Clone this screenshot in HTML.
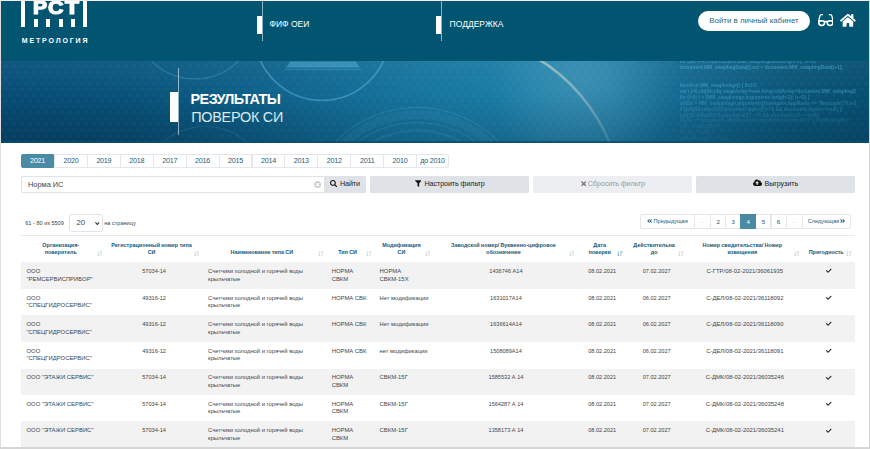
<!DOCTYPE html><html lang="ru"><head><meta charset="utf-8"><title>Результаты поверок СИ</title><style>
*{box-sizing:border-box;margin:0;padding:0}
html,body{width:870px;height:449px;overflow:hidden;background:#fff}
body{position:relative;font-family:"Liberation Sans",sans-serif;color:#3f4449;-webkit-font-smoothing:antialiased}
.abs{position:absolute}
.ic{display:inline-block;vertical-align:middle}
header{position:absolute;left:0;top:0;width:870px;height:60.500px;background:#015571}
.logo .bar{position:absolute;background:#fff}
.logo .rst span{position:absolute;top:-2.9px;font-weight:700;font-size:18.1px;line-height:22px;color:#fff;-webkit-text-stroke:1.2px #fff;transform-origin:0 0;white-space:nowrap}
.logo .met{position:absolute;left:21.8px;top:36.4px;font-weight:700;font-size:7px;line-height:9px;letter-spacing:1.85px;color:#fff;white-space:nowrap}
nav .vl{position:absolute;top:0;width:1px;height:41.3px;background:rgba(255,255,255,.55)}
nav .wb{position:absolute;top:15.6px;width:5px;height:18.2px;background:#fff}
nav a{position:absolute;top:18px;line-height:12px;font-size:8.5px;color:#fff;text-decoration:none;white-space:nowrap}
.login{position:absolute;left:698px;top:11px;width:112px;height:19.6px;border-radius:10px;background:#fff;color:#2a6885;font-size:7.900px;line-height:19.600px;text-align:center;white-space:nowrap}
.banner{position:absolute;left:0;top:60.5px;width:870px;height:82px;overflow:hidden;background:#0f5f83}
.banner .g{position:absolute;inset:0;background:linear-gradient(90deg,#07507a 0%,#09567e 15%,#0e628b 30%,#16759e 48%,#1c7fa8 62%,#1a7aa3 70%,#106288 82%,#095476 92%,#074f71 100%)}
.banner .g2{position:absolute;inset:0;background:radial-gradient(ellipse 300px 70px at 60px 82px,rgba(0,25,45,.2),rgba(0,25,45,0)),linear-gradient(180deg,rgba(255,255,255,.04) 0%,rgba(0,0,0,0) 40%,rgba(0,30,50,.22) 100%)}
.code{position:absolute;left:679.500px;top:-1.400px;font-weight:700;font-size:4.850px;line-height:5.930px;color:#4fb0da;white-space:nowrap;width:176px;overflow:hidden}
.banner h1{position:absolute;left:190.6px;top:91px;font-size:14.4px;line-height:17.8px;color:#fff;font-weight:400;white-space:nowrap;margin-top:-60.5px}
.banner h1 b{font-weight:700;display:block;letter-spacing:-0.580px}
.banner h1 span{display:block;font-weight:400;color:#dbe9f0;letter-spacing:-0.250px;margin-left:0.600px}
.tabs{position:absolute;left:0;top:154.200px;height:13.900px}
.tabs a{position:absolute;top:0;display:block;height:13.900px;border:1px solid #e4e8ec;background:#fff;text-align:center;font-size:7.200px;letter-spacing:-0.250px;line-height:12px;color:#1d5b78;white-space:nowrap}
.tabs a.on{background:#4a8aa3;border-color:#4a8aa3;color:#fff;border-radius:2px 0 0 2px;z-index:2}
.tabs a:last-child{border-radius:0 2px 2px 0}
.inp{position:absolute;left:21px;top:175.6px;width:303.500px;height:17.2px;border:0.5px solid #dfe4e8;border-right:0;border-radius:2px 0 0 2px;font-size:7.400px;line-height:15.400px;padding-left:6px;color:#444}
.btn{position:absolute;top:175.8px;height:17px;border-radius:1.500px;background:#dfe3e8;color:#222;font-size:7.200px;letter-spacing:-0.100px;line-height:16.200px;text-align:center;white-space:nowrap}
.btn.dis{background:#eceef1;color:#9a9a9a}
.info{position:absolute;font-size:5.600px;line-height:8px;color:#454545;white-space:nowrap}
.sel{position:absolute;left:69.100px;top:214.100px;width:33.600px;height:17.500px;border:1px solid #dfe4e8;border-radius:2.500px;font-size:7.800px;line-height:16px;padding-left:6.400px;color:#444}
.pag{position:absolute;left:0;top:213.800px;height:15.700px}
.pag a{position:absolute;top:0;display:block;height:15.700px;border:1px solid #e4e8ec;background:#fff;text-align:center;font-size:5.600px;line-height:13.700px;color:#1d5b78;white-space:nowrap}
.pag a.num{font-size:6.200px}
.pag a.on{background:#4a8aa3;border-color:#4a8aa3;color:#fff;z-index:2}
.pag a.d{color:#a9b4bb}
.pag a:first-child{border-radius:2px 0 0 2px}
.pag a:last-child{border-radius:0 2px 2px 0}
.tbl{position:absolute;left:21px;top:235.200px;width:833.700px}
.thead{position:relative;height:27.500px;border-top:1px solid #e8ebee}
.th{position:absolute;top:0;height:100%;font-weight:700;font-size:5.450px;word-spacing:-0.300px;line-height:7.300px;color:#185878;text-align:center;display:flex;flex-direction:column;justify-content:flex-end;padding:0 10.600px 6.200px 5.500px;white-space:nowrap}
.th .si{position:absolute;right:3.200px;bottom:6.700px}
.tr{position:absolute;left:0;width:100%}
.tr.odd{background:#f2f2f2}
.td{position:absolute;top:var(--t);font-size:5.900px;line-height:7.500px;color:#41464b;padding:0 5.500px;white-space:nowrap}
.td.c{text-align:center}
.td.s{font-size:5.800px}
.td.n{font-size:5.600px}
.td.m{font-size:5.650px}
.frame{position:absolute;pointer-events:none}
</style></head><body>
<header>
<div class="logo">
<div class="bar" style="left:21.300px;top:0;width:4.100px;height:27.100px"></div>
<div class="bar" style="left:83.100px;top:0;width:4.300px;height:27.100px"></div>
<div class="bar" style="left:33.85px;top:18.900px;width:4px;height:8.200px"></div>
<div class="bar" style="left:46.3px;top:18.900px;width:4px;height:8.200px"></div>
<div class="bar" style="left:58.7px;top:18.900px;width:4px;height:8.200px"></div>
<div class="bar" style="left:71.0px;top:18.900px;width:4px;height:8.200px"></div>
<div class="rst"><span style="left:33.1px;transform:scaleX(1.17)">Р</span><span style="left:48.2px;transform:scaleX(1.18)">С</span><span style="left:65.2px;transform:scaleX(1.26)">Т</span></div><div class="met">МЕТРОЛОГИЯ</div></div>
<nav>
<div class="vl" style="left:262px"></div><div class="wb" style="left:257px"></div><a style="left:269.500px">ФИФ ОЕИ</a>
<div class="vl" style="left:441.200px"></div><div class="wb" style="left:436.200px"></div><a style="left:449.600px">ПОДДЕРЖКА</a>
</nav>
<div class="login">Войти в личный кабинет</div>
<svg class="ic" viewBox="0 0 576 512" width="15.8" height="14.04" style="position:absolute;left:817.500px;top:13px" fill="#fff"><path d="M574.1 280.37L528.75 98.66c-5.91-23.7-21.59-44.05-43-55.81-21.44-11.73-46.97-14.11-70.19-6.33l-15.25 5.08c-8.39 2.79-12.92 11.86-10.12 20.24l5.06 15.18c2.79 8.38 11.85 12.91 20.23 10.12l13.18-4.39c10.87-3.62 23-3.57 33.16 1.73 10.29 5.37 17.57 14.56 20.37 25.82l38.46 153.82c-22.19-6.81-49.79-12.46-81.2-12.46-34.77 0-73.98 7.02-114.85 26.74h-73.18c-40.87-19.74-80.08-26.75-114.86-26.75-31.42 0-59.02 5.65-81.21 12.46l38.46-153.83c2.79-11.25 10.09-20.45 20.38-25.81 10.16-5.3 22.28-5.35 33.15-1.73l13.17 4.39c8.38 2.79 17.44-1.74 20.23-10.12l5.06-15.18c2.8-8.38-1.73-17.45-10.12-20.24l-15.25-5.08c-23.22-7.78-48.75-5.41-70.19 6.33-21.41 11.77-37.09 32.11-43 55.8L1.9 280.37A64.218 64.218 0 0 0 0 295.86v70.25C0 429.01 51.58 480 115.2 480h37.12c60.28 0 110.37-45.94 114.88-105.37l2.93-38.63h35.75l2.93 38.63C313.31 434.06 363.4 480 423.68 480h37.12c63.62 0 115.2-50.99 115.2-113.88v-70.25c0-5.23-.64-10.43-1.9-15.5zm-370.72 89.42c-1.97 25.91-24.4 46.21-51.06 46.21H115.2C86.97 416 64 393.62 64 366.11v-37.54c18.12-6.49 43.42-12.92 72.58-12.92 23.86 0 47.26 4.33 69.93 12.92l-3.13 41.22zM512 366.12c0 27.51-22.97 49.88-51.2 49.88h-37.12c-26.67 0-49.1-20.3-51.06-46.21l-3.13-41.22c22.67-8.59 46.08-12.92 69.95-12.92 29.12 0 54.43 6.44 72.55 12.93v37.54z"/></svg>
<svg preserveAspectRatio="none" class="ic" viewBox="0 0 576 512" width="15.8" height="14.7" style="position:absolute;left:840px;top:13.200px" fill="#fff"><path d="M280.37 148.26L96 300.11V464a16 16 0 0 0 16 16l112.06-.29a16 16 0 0 0 15.920-16V368a16 16 0 0 1 16-16h64a16 16 0 0 1 16 16v95.640a16 16 0 0 0 16 16.050L464 480a16 16 0 0 0 16-16V300L295.670 148.260a12.190 12.190 0 0 0-15.300 0zM571.600 251.470L488 182.560V44.050a12 12 0 0 0-12-12h-56a12 12 0 0 0-12 12v72.610L318.470 43a48 48 0 0 0-61 0L4.340 251.470a12 12 0 0 0-1.600 16.900l25.500 31A12 12 0 0 0 45.150 301l235.220-193.740a12.190 12.190 0 0 1 15.300 0L530.900 301a12 12 0 0 0 16.900-1.600l25.500-31a12 12 0 0 0-1.700-16.930z"/></svg>
</header>
<section class="banner"><div class="g"></div><div class="g2"></div>
<svg class="abs" style="left:0;top:0" width="870" height="82" viewBox="0 60.5 870 82"><g fill="none" stroke="#6cc0e0"><circle cx="195" cy="16.6" r="61.8" stroke-width="1.3" stroke-opacity=".28"/><circle cx="322" cy="32.4" r="67.4" stroke-width="1.8" stroke-opacity=".42"/><circle cx="417" cy="222" r="115" stroke-width="1" stroke-opacity=".22"/><circle cx="417" cy="222" r="108" stroke-width="9" stroke-opacity=".07"/><circle cx="417" cy="222" r="100" stroke-width="1" stroke-opacity=".18"/><circle cx="417" cy="222" r="92" stroke-width="2.5" stroke-opacity=".10"/><circle cx="205" cy="190" r="64" stroke-width="1.2" stroke-opacity=".16"/></g><defs><linearGradient id="sg" x1="0" y1="0" x2="0" y2="1"><stop offset="0" stop-color="#ffeedd" stop-opacity=".5"/><stop offset=".55" stop-color="#ffeedd" stop-opacity=".28"/><stop offset="1" stop-color="#ffeedd" stop-opacity=".08"/></linearGradient><radialGradient id="hz" cx="585" cy="80" r="95" gradientUnits="userSpaceOnUse"><stop offset="0" stop-color="#cfe6ee" stop-opacity=".16"/><stop offset="1" stop-color="#cfe6ee" stop-opacity="0"/></radialGradient><pattern id="dt" width="8" height="11.600" patternUnits="userSpaceOnUse"><circle cx="2" cy="2" r="1.700" fill="#fff" fill-opacity=".028"/><circle cx="6" cy="7.800" r="1.700" fill="#fff" fill-opacity=".028"/></pattern><filter id="bl" x="-20%" y="-20%" width="140%" height="140%"><feGaussianBlur stdDeviation="0.700"/></filter></defs><rect x="0" y="60" width="870" height="84" fill="url(#dt)"/><rect x="470" y="60" width="240" height="84" fill="url(#hz)"/><path d="M534.300 56A178 178 0 0 1 611.100 146" fill="none" stroke="url(#sg)" stroke-width="2.600" filter="url(#bl)"/><path d="M290 61H356L359.500 67H286.500Z" fill="#57b3d8" fill-opacity=".5"/><rect x="284.500" y="68.300" width="77" height="1" fill="#57b3d8" fill-opacity=".45"/></svg>
<div class="code">
<p style="opacity:0.5">for (var i=0; i&lt;(document.MM_swapImgData.length-1); i+=2)</p>
<p style="opacity:0.6">document.MM_swapImgData[i].src = document.MM_swapImgData[i+1];</p>
<p style="opacity:0">&nbsp;</p>
<p style="opacity:0">&nbsp;</p>
<p style="opacity:0.5">function MM_swapImage() { //v3.0</p>
<p style="opacity:0.5">var i,j=0,objStr,obj,swapArray=new Array,oldArray=document.MM_swapImgData;</p>
<p style="opacity:0.45">for (i=0; i &lt; (MM_swapImage.arguments.length-2); i+=3) {</p>
<p style="opacity:0.4">objStr = MM_swapImage.arguments[(navigator.appName == 'Netscape')?i:i+1];</p>
<p style="opacity:0.32">if ((objStr.indexOf('document.layers[')==0 &amp;&amp; document.layers==null) ||</p>
<p style="opacity:0.26">(objStr.indexOf('document.all[') ==0 &amp;&amp; document.all ==null))</p>
<p style="opacity:0.2">objStr = 'document'+objStr.substring(objStr.lastIndexOf('.'),objStr.length);</p>
<p style="opacity:0.16">obj = eval(objStr);</p>
<p style="opacity:0.13">if (obj != null) {</p>
<p style="opacity:0.1">swapArray[j++] = obj;</p>
</div>
<div class="abs" style="left:178.300px;top:7.200px;width:1px;height:67.500px;background:rgba(255,255,255,.55)"></div>
<div class="abs" style="left:170.200px;top:31.600px;width:8.100px;height:29.600px;background:#fff"></div>
<h1><b>РЕЗУЛЬТАТЫ</b><span>ПОВЕРОК СИ</span></h1>
<div class="abs" style="left:0;top:80.500px;width:870px;height:1.500px;background:#0a4d6c;opacity:.8"></div>
</section>
<div class="tabs">
<a class=on style="left:21.10px;width:32.91px">2021</a>
<a style="left:54.02px;width:33.92px">2020</a>
<a style="left:86.93px;width:33.91px">2019</a>
<a style="left:119.84px;width:33.91px">2018</a>
<a style="left:152.76px;width:33.91px">2017</a>
<a style="left:185.67px;width:33.92px">2016</a>
<a style="left:218.59px;width:33.91px">2015</a>
<a style="left:251.50px;width:33.92px">2014</a>
<a style="left:284.42px;width:33.92px">2013</a>
<a style="left:317.34px;width:33.91px">2012</a>
<a style="left:350.25px;width:33.92px">2011</a>
<a style="left:383.17px;width:33.92px">2010</a>
<a style="left:416.08px;width:32.91px">до 2010</a>
</div>
<div class="inp">Норма ИС<svg class="ic" viewBox="0 0 512 512" width="7.2" height="7.2" style="position:absolute;left:291.700px;top:4.600px" fill="#cfcfcf"><path d="M256 8C119 8 8 119 8 256s111 248 248 248 248-111 248-248S393 8 256 8zm121.6 313.1c4.7 4.7 4.7 12.3 0 17L338 377.6c-4.7 4.7-12.3 4.7-17 0L256 312l-65.1 65.6c-4.7 4.7-12.3 4.7-17 0L134.4 338c-4.7-4.7-4.7-12.3 0-17l65.6-65-65.6-65.1c-4.7-4.7-4.7-12.3 0-17l39.6-39.6c4.700-4.7 12.300-4.7 17 0l65 65.7 65.1-65.6c4.700-4.700 12.300-4.700 17 0l39.600 39.600c4.700 4.700 4.700 12.300 0 17L312 256l65.600 65.100z"/></svg></div>
<div class="btn" style="left:324.300px;width:41.700px;border-radius:0 1.500px 1.500px 0"><svg class="ic" viewBox="0 0 512 512" width="7.2" height="7.2" style="margin:-0.600px 2.500px 0 0" fill="#111"><path d="M505 442.7L405.3 343c-4.5-4.5-10.6-7-17-7H372c27.6-35.3 44-79.7 44-128C416 93.1 322.9 0 208 0S0 93.1 0 208s93.1 208 208 208c48.3 0 92.7-16.4 128-44v16.3c0 6.4 2.5 12.5 7 17l99.7 99.7c9.4 9.4 24.6 9.4 33.9 0l28.3-28.3c9.4-9.4 9.4-24.6.1-34zM208 336c-70.7 0-128-57.2-128-128 0-70.7 57.2-128 128-128 70.7 0 128 57.2 128 128 0 70.7-57.2 128-128 128z"/></svg>Найти</div>
<div class="btn" style="left:370.300px;width:158.900px"><svg class="ic" viewBox="0 0 512 512" width="6.6" height="7.2" style="margin:-1px 3px 0 0" fill="#111"><path d="M487.976 0H24.028C2.71 0-8.047 25.866 7.058 40.971L192 225.941V432c0 7.831 3.821 15.17 10.237 19.662l80 55.98C298.02 518.69 320 507.493 320 487.98V225.941l184.947-184.97C520.021 25.896 509.338 0 487.976 0z"/></svg>Настроить фильтр</div>
<div class="btn dis" style="left:533.300px;width:158.900px"><svg class="ic" viewBox="0 0 352 512" width="5.4" height="7.4" style="margin:-0.700px 1.700px 0 0" fill="#777"><path d="M242.72 256l100.07-100.07c12.28-12.28 12.28-32.19 0-44.48l-22.24-22.24c-12.28-12.28-32.19-12.28-44.48 0L176 189.28 75.93 89.21c-12.28-12.28-32.19-12.28-44.48 0L9.21 111.45c-12.28 12.28-12.28 32.19 0 44.48L109.28 256 9.21 356.07c-12.28 12.28-12.28 32.19 0 44.48l22.24 22.24c12.28 12.28 32.2 12.28 44.48 0L176 322.72l100.07 100.07c12.28 12.28 32.2 12.28 44.48 0l22.24-22.24c12.28-12.28 12.28-32.19 0-44.48L242.72 256z"/></svg>Сбросить фильтр</div>
<div class="btn" style="left:696.200px;width:158.600px"><svg class="ic" viewBox="0 0 640 512" width="9.2" height="7.36" style="margin:-1.700px 2.400px 0 0" fill="#111"><path d="M537.6 226.6c4.1-10.7 6.4-22.4 6.4-34.6 0-53-43-96-96-96-19.7 0-38.1 6-53.3 16.2C367 64.2 315.3 32 256 32c-88.4 0-160 71.6-160 160 0 2.7.1 5.4.2 8.1C40.2 219.8 0 273.2 0 336c0 79.5 64.5 144 144 144h368c70.7 0 128-57.3 128-128 0-61.9-44-113.6-102.4-125.4zM393.4 288H328v112c0 8.8-7.2 16-16 16h-48c-8.8 0-16-7.2-16-16V288h-65.4c-14.3 0-21.4-17.2-11.3-27.3l105.4-105.4c6.2-6.2 16.4-6.2 22.6 0l105.4 105.4c10.1 10.1 2.9 27.3-11.3 27.3z"/></svg>Выгрузить</div>
<div class="info" style="left:25.200px;top:219.400px">61 - 80 из 5509</div>
<div class="sel">20<svg class="abs" style="left:25px;top:6.600px" width="4.600" height="3.200" viewBox="0 0 10 7"><path d="M1 1L5 5.500L9 1" stroke="#222" stroke-width="2.200" fill="none"/></svg></div>
<div class="info" style="left:104.200px;top:219.400px">на страницу</div>
<div class="pag">
<a style="left:640.30px;width:54.30px"><svg class="ic" viewBox="0 0 448 512" width="5.2" height="5.9" style="margin:-0.800px 1.200px 0 0" fill="#1d5b78"><path d="M223.7 239l136-136c9.4-9.4 24.6-9.4 33.9 0l22.6 22.6c9.4 9.4 9.4 24.6 0 33.9L319.9 256l96.4 96.4c9.4 9.4 9.4 24.6 0 33.9L393.7 409c-9.4 9.4-24.6 9.4-33.9 0l-136-136c-9.5-9.4-9.5-24.6-.1-34zm-192 34l136 136c9.4 9.4 24.6 9.4 33.9 0l22.6-22.6c9.4-9.4 9.4-24.6 0-33.9L127.9 256l96.4-96.4c9.4-9.4 9.4-24.6 0-33.9L201.7 103c-9.4-9.4-24.6-9.4-33.9 0l-136 136c-9.5 9.4-9.5 24.6-.1 34z"/></svg>Предыдущая</a>
<a class=d style="left:693.60px;width:17.50px">…</a>
<a class=num style="left:710.10px;width:16.20px">2</a>
<a class=num style="left:725.30px;width:15.90px">3</a>
<a class="on num" style="left:740.20px;width:16.10px">4</a>
<a class=num style="left:755.30px;width:16.20px">5</a>
<a class=num style="left:770.50px;width:16.20px">6</a>
<a class=d style="left:785.70px;width:17.40px">…</a>
<a style="left:802.10px;width:49.30px">Следующая<svg class="ic" viewBox="0 0 448 512" width="5.2" height="5.9" style="margin:-0.800px 0 0 1.400px" fill="#1d5b78"><path transform="translate(448 0) scale(-1 1)" d="M223.7 239l136-136c9.4-9.4 24.6-9.4 33.9 0l22.6 22.6c9.4 9.4 9.4 24.6 0 33.9L319.9 256l96.4 96.4c9.4 9.4 9.4 24.6 0 33.9L393.7 409c-9.4 9.4-24.6 9.4-33.9 0l-136-136c-9.5-9.4-9.5-24.6-.1-34zm-192 34l136 136c9.4 9.4 24.6 9.4 33.9 0l22.6-22.6c9.4-9.4 9.4-24.6 0-33.9L127.9 256l96.4-96.4c9.4-9.4 9.4-24.6 0-33.9L201.7 103c-9.4-9.4-24.6-9.4-33.9 0l-136 136c-9.5 9.4-9.5 24.6-.1 34z"/></svg></a>
</div>
<div class="tbl"><div class="thead">
<div class="th" style="left:0.0px;width:84.6px"><span>Организация-</span><span>поверитель</span><svg class="si" viewBox="0 0 12 12" width="5.4" height="5.4"><g stroke="#bdd1db" stroke-width="1.5" fill="none"><path d="M3 0.5V11M0.6 8L3 11L5.4 8"/><path d="M9 11.5V1M6.6 4L9 1L11.4 4"/></g></svg></div>
<div class="th" style="left:84.6px;width:97.0px"><span>Регистрационный номер типа</span><span>СИ</span><svg class="si" viewBox="0 0 12 12" width="5.4" height="5.4"><g stroke="#bdd1db" stroke-width="1.5" fill="none"><path d="M3 0.5V11M0.6 8L3 11L5.4 8"/><path d="M9 11.5V1M6.6 4L9 1L11.4 4"/></g></svg></div>
<div class="th" style="left:181.6px;width:123.6px"><span>Наименование типа СИ</span><svg class="si" viewBox="0 0 12 12" width="5.4" height="5.4"><g stroke="#bdd1db" stroke-width="1.5" fill="none"><path d="M3 0.5V11M0.6 8L3 11L5.4 8"/><path d="M9 11.5V1M6.6 4L9 1L11.4 4"/></g></svg></div>
<div class="th" style="left:305.2px;width:47.9px"><span>Тип СИ</span><svg class="si" viewBox="0 0 12 12" width="5.4" height="5.4"><g stroke="#bdd1db" stroke-width="1.5" fill="none"><path d="M3 0.5V11M0.6 8L3 11L5.4 8"/><path d="M9 11.5V1M6.6 4L9 1L11.4 4"/></g></svg></div>
<div class="th" style="left:353.1px;width:59.8px"><span>Модификация</span><span>СИ</span><svg class="si" viewBox="0 0 12 12" width="5.4" height="5.4"><g stroke="#bdd1db" stroke-width="1.5" fill="none"><path d="M3 0.5V11M0.6 8L3 11L5.4 8"/><path d="M9 11.5V1M6.6 4L9 1L11.4 4"/></g></svg></div>
<div class="th" style="left:412.9px;width:144.1px"><span>Заводской номер/ Буквенно-цифровое</span><span>обозначение</span><svg class="si" viewBox="0 0 12 12" width="5.4" height="5.4"><g stroke="#bdd1db" stroke-width="1.5" fill="none"><path d="M3 0.5V11M0.6 8L3 11L5.4 8"/><path d="M9 11.5V1M6.6 4L9 1L11.4 4"/></g></svg></div>
<div class="th" style="left:557.0px;width:48.4px"><span>Дата</span><span>поверки</span><svg class="si" viewBox="0 0 13 12" width="5.900" height="5.400"><g stroke="#7fabbf" stroke-width="1.700" fill="none"><path d="M3 0.500V11M0.600 8L3 11L5.400 8"/><path d="M7 2H13M7 6H11M7 10H9.500" stroke-width="2.400" stroke="#9cbfce"/></g></svg></div>
<div class="th" style="left:605.4px;width:60.5px"><span>Действительна</span><span>до</span><svg class="si" viewBox="0 0 12 12" width="5.4" height="5.4"><g stroke="#bdd1db" stroke-width="1.5" fill="none"><path d="M3 0.5V11M0.6 8L3 11L5.4 8"/><path d="M9 11.5V1M6.6 4L9 1L11.4 4"/></g></svg></div>
<div class="th" style="left:665.9px;width:115.9px"><span>Номер свидетельства/ Номер</span><span>извещения</span><svg class="si" viewBox="0 0 12 12" width="5.4" height="5.4"><g stroke="#bdd1db" stroke-width="1.5" fill="none"><path d="M3 0.5V11M0.6 8L3 11L5.4 8"/><path d="M9 11.5V1M6.6 4L9 1L11.4 4"/></g></svg></div>
<div class="th" style="left:781.8px;width:51.9px"><span>Пригодность</span><svg class="si" viewBox="0 0 12 12" width="5.4" height="5.4"><g stroke="#bdd1db" stroke-width="1.5" fill="none"><path d="M3 0.5V11M0.6 8L3 11L5.4 8"/><path d="M9 11.5V1M6.6 4L9 1L11.4 4"/></g></svg></div>
</div>
<div class="tr odd" style="top:26.80px;height:27.50px;--t:6.30px">
<div class="td " style="left:0.0px;width:84.6px">ООО<br>"РЕМСЕРВИСПРИБОР"</div>
<div class="td c m" style="left:84.6px;width:97.0px">57034-14</div>
<div class="td s" style="left:181.6px;width:123.6px">Счетчики холодной и горячей воды<br>крыльчатые</div>
<div class="td " style="left:305.2px;width:47.9px">НОРМА<br>СВКМ</div>
<div class="td " style="left:353.1px;width:59.8px">НОРМА<br>СВКМ-15Х</div>
<div class="td c n" style="left:412.9px;width:144.1px">1436746 А14</div>
<div class="td c n" style="left:557.0px;width:48.4px">08.02.2021</div>
<div class="td c n" style="left:605.4px;width:60.5px">07.02.2027</div>
<div class="td c" style="left:665.9px;width:115.9px">С-ГТР/08-02-2021/36061935</div>
<div class="td c" style="left:781.8px;width:51.9px"><svg class="ic" viewBox="0 0 512 512" width="5.6" height="5.6" style="margin-top:-1px" fill="#222"><path d="M173.898 439.404l-166.4-166.4c-9.997-9.997-9.997-26.206 0-36.204l36.203-36.204c9.997-9.998 26.207-9.998 36.204 0L192 312.69 432.095 72.596c9.997-9.997 26.207-9.997 36.204 0l36.203 36.204c9.997 9.997 9.997 26.206 0 36.204l-294.4 294.401c-9.998 9.997-26.207 9.997-36.204-.001z"/></svg></div>
</div>
<div class="tr" style="top:54.30px;height:25.50px;--t:5.33px">
<div class="td " style="left:0.0px;width:84.6px">ООО<br>"СПЕЦГИДРОСЕРВИС"</div>
<div class="td c m" style="left:84.6px;width:97.0px">49316-12</div>
<div class="td s" style="left:181.6px;width:123.6px">Счетчики холодной и горячей воды<br>крыльчатые</div>
<div class="td " style="left:305.2px;width:47.9px">НОРМА СВК</div>
<div class="td s" style="left:353.1px;width:59.8px">Нет модификации</div>
<div class="td c n" style="left:412.9px;width:144.1px">1631017А14</div>
<div class="td c n" style="left:557.0px;width:48.4px">08.02.2021</div>
<div class="td c n" style="left:605.4px;width:60.5px">06.02.2027</div>
<div class="td c" style="left:665.9px;width:115.9px">С-ДЕЛ/08-02-2021/36118092</div>
<div class="td c" style="left:781.8px;width:51.9px"><svg class="ic" viewBox="0 0 512 512" width="5.6" height="5.6" style="margin-top:-1px" fill="#222"><path d="M173.898 439.404l-166.4-166.4c-9.997-9.997-9.997-26.206 0-36.204l36.203-36.204c9.997-9.998 26.207-9.998 36.204 0L192 312.69 432.095 72.596c9.997-9.997 26.207-9.997 36.204 0l36.203 36.204c9.997 9.997 9.997 26.206 0 36.204l-294.4 294.401c-9.998 9.997-26.207 9.997-36.204-.001z"/></svg></div>
</div>
<div class="tr odd" style="top:79.80px;height:27.20px;--t:6.36px">
<div class="td " style="left:0.0px;width:84.6px">ООО<br>"СПЕЦГИДРОСЕРВИС"</div>
<div class="td c m" style="left:84.6px;width:97.0px">49316-12</div>
<div class="td s" style="left:181.6px;width:123.6px">Счетчики холодной и горячей воды<br>крыльчатые</div>
<div class="td " style="left:305.2px;width:47.9px">НОРМА СВК</div>
<div class="td s" style="left:353.1px;width:59.8px">Нет модификации</div>
<div class="td c n" style="left:412.9px;width:144.1px">1636614А14</div>
<div class="td c n" style="left:557.0px;width:48.4px">08.02.2021</div>
<div class="td c n" style="left:605.4px;width:60.5px">06.02.2027</div>
<div class="td c" style="left:665.9px;width:115.9px">С-ДЕЛ/08-02-2021/36118090</div>
<div class="td c" style="left:781.8px;width:51.9px"><svg class="ic" viewBox="0 0 512 512" width="5.6" height="5.6" style="margin-top:-1px" fill="#222"><path d="M173.898 439.404l-166.4-166.4c-9.997-9.997-9.997-26.206 0-36.204l36.203-36.204c9.997-9.998 26.207-9.998 36.204 0L192 312.69 432.095 72.596c9.997-9.997 26.207-9.997 36.204 0l36.203 36.204c9.997 9.997 9.997 26.206 0 36.204l-294.4 294.401c-9.998 9.997-26.207 9.997-36.204-.001z"/></svg></div>
</div>
<div class="tr" style="top:107.00px;height:26.60px;--t:5.69px">
<div class="td " style="left:0.0px;width:84.6px">ООО<br>"СПЕЦГИДРОСЕРВИС"</div>
<div class="td c m" style="left:84.6px;width:97.0px">49316-12</div>
<div class="td s" style="left:181.6px;width:123.6px">Счетчики холодной и горячей воды<br>крыльчатые</div>
<div class="td " style="left:305.2px;width:47.9px">НОРМА СВК</div>
<div class="td s" style="left:353.1px;width:59.8px">нет модификации</div>
<div class="td c n" style="left:412.9px;width:144.1px">1508089А14</div>
<div class="td c n" style="left:557.0px;width:48.4px">08.02.2021</div>
<div class="td c n" style="left:605.4px;width:60.5px">06.02.2027</div>
<div class="td c" style="left:665.9px;width:115.9px">С-ДЕЛ/08-02-2021/36118091</div>
<div class="td c" style="left:781.8px;width:51.9px"><svg class="ic" viewBox="0 0 512 512" width="5.6" height="5.6" style="margin-top:-1px" fill="#222"><path d="M173.898 439.404l-166.4-166.4c-9.997-9.997-9.997-26.206 0-36.204l36.203-36.204c9.997-9.998 26.207-9.998 36.204 0L192 312.69 432.095 72.596c9.997-9.997 26.207-9.997 36.204 0l36.203 36.204c9.997 9.997 9.997 26.206 0 36.204l-294.4 294.401c-9.998 9.997-26.207 9.997-36.204-.001z"/></svg></div>
</div>
<div class="tr odd" style="top:133.60px;height:26.60px;--t:5.62px">
<div class="td " style="left:0.0px;width:84.6px">ООО "ЭТАЖИ СЕРВИС"</div>
<div class="td c m" style="left:84.6px;width:97.0px">57034-14</div>
<div class="td s" style="left:181.6px;width:123.6px">Счетчики холодной и горячей воды<br>крыльчатые</div>
<div class="td " style="left:305.2px;width:47.9px">НОРМА<br>СВКМ</div>
<div class="td " style="left:353.1px;width:59.8px">СВКМ-15Г</div>
<div class="td c n" style="left:412.9px;width:144.1px">1585532 А 14</div>
<div class="td c n" style="left:557.0px;width:48.4px">08.02.2021</div>
<div class="td c n" style="left:605.4px;width:60.5px">07.02.2027</div>
<div class="td c" style="left:665.9px;width:115.9px">С-ДМК/08-02-2021/36035246</div>
<div class="td c" style="left:781.8px;width:51.9px"><svg class="ic" viewBox="0 0 512 512" width="5.6" height="5.6" style="margin-top:-1px" fill="#222"><path d="M173.898 439.404l-166.4-166.4c-9.997-9.997-9.997-26.206 0-36.204l36.203-36.204c9.997-9.998 26.207-9.998 36.204 0L192 312.69 432.095 72.596c9.997-9.997 26.207-9.997 36.204 0l36.203 36.204c9.997 9.997 9.997 26.206 0 36.204l-294.4 294.401c-9.998 9.997-26.207 9.997-36.204-.001z"/></svg></div>
</div>
<div class="tr" style="top:160.20px;height:25.90px;--t:5.55px">
<div class="td " style="left:0.0px;width:84.6px">ООО "ЭТАЖИ СЕРВИС"</div>
<div class="td c m" style="left:84.6px;width:97.0px">57034-14</div>
<div class="td s" style="left:181.6px;width:123.6px">Счетчики холодной и горячей воды<br>крыльчатые</div>
<div class="td " style="left:305.2px;width:47.9px">НОРМА<br>СВКМ</div>
<div class="td " style="left:353.1px;width:59.8px">СВКМ-15Г</div>
<div class="td c n" style="left:412.9px;width:144.1px">1564287 А 14</div>
<div class="td c n" style="left:557.0px;width:48.4px">08.02.2021</div>
<div class="td c n" style="left:605.4px;width:60.5px">07.02.2027</div>
<div class="td c" style="left:665.9px;width:115.9px">С-ДМК/08-02-2021/36035248</div>
<div class="td c" style="left:781.8px;width:51.9px"><svg class="ic" viewBox="0 0 512 512" width="5.6" height="5.6" style="margin-top:-1px" fill="#222"><path d="M173.898 439.404l-166.4-166.4c-9.997-9.997-9.997-26.206 0-36.204l36.203-36.204c9.997-9.998 26.207-9.998 36.204 0L192 312.69 432.095 72.596c9.997-9.997 26.207-9.997 36.204 0l36.203 36.204c9.997 9.997 9.997 26.206 0 36.204l-294.4 294.401c-9.998 9.997-26.207 9.997-36.204-.001z"/></svg></div>
</div>
<div class="tr odd" style="top:186.10px;height:26.10px;--t:6.18px">
<div class="td " style="left:0.0px;width:84.6px">ООО "ЭТАЖИ СЕРВИС"</div>
<div class="td c m" style="left:84.6px;width:97.0px">57034-14</div>
<div class="td s" style="left:181.6px;width:123.6px">Счетчики холодной и горячей воды<br>крыльчатые</div>
<div class="td " style="left:305.2px;width:47.9px">НОРМА<br>СВКМ</div>
<div class="td " style="left:353.1px;width:59.8px">СВКМ-15Г</div>
<div class="td c n" style="left:412.9px;width:144.1px">1358173 А 14</div>
<div class="td c n" style="left:557.0px;width:48.4px">08.02.2021</div>
<div class="td c n" style="left:605.4px;width:60.5px">07.02.2027</div>
<div class="td c" style="left:665.9px;width:115.9px">С-ДМК/08-02-2021/36035241</div>
<div class="td c" style="left:781.8px;width:51.9px"><svg class="ic" viewBox="0 0 512 512" width="5.6" height="5.6" style="margin-top:-1px" fill="#222"><path d="M173.898 439.404l-166.4-166.4c-9.997-9.997-9.997-26.206 0-36.204l36.203-36.204c9.997-9.998 26.207-9.998 36.204 0L192 312.69 432.095 72.596c9.997-9.997 26.207-9.997 36.204 0l36.203 36.204c9.997 9.997 9.997 26.206 0 36.204l-294.4 294.401c-9.998 9.997-26.207 9.997-36.204-.001z"/></svg></div>
</div>
</div>
<div class="frame" style="left:0;top:0;width:870px;height:1px;background:#f3eeee"></div>
<div class="frame" style="left:0;top:1px;width:1px;height:448px;background:#e2dfdf"></div>
<div class="frame" style="left:868.800px;top:0;width:1.200px;height:449px;background:#d6d6d6"></div>
<div class="frame" style="left:0;top:447.400px;width:870px;height:1.600px;background:#d6d6d6"></div>
</body></html>
